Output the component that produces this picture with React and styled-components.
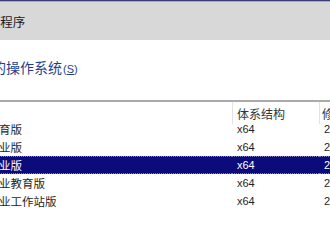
import React from "react";
import styled, { createGlobalStyle } from "styled-components";

const Global = createGlobalStyle`
  html, body { margin: 0; padding: 0; background: #ffffff; overflow: hidden; }
  body { width: 330px; height: 248px; }
`;

const FONT = `"Liberation Sans", "Noto Sans CJK SC", sans-serif`;

const Window = styled.div`
  margin-left: -90px;
  width: 700px;
  height: 248px;
  display: flex;
  flex-direction: column;
  font-family: ${FONT};
  background: #ffffff;
  border-top: 1px solid #3b3a78;
`;

const TitleBar = styled.div`
  height: 38px;
  border-top: 1px solid #a9a8c8;
  background: #d8d8d8;
  display: flex;
  align-items: center;
  padding-left: 11px;
  font-size: 12.5px;
  color: #1a1a1a;
`;

const Body = styled.div`
  height: 60px;
  display: flex;
  align-items: center;
  padding-left: 12px;
  padding-bottom: 7px;
  box-sizing: border-box;
`;

const Heading = styled.div`
  font-size: 14px;
  color: #1f3f8e;
  display: flex;
  align-items: baseline;
`;

const Accel = styled.span`
  font-size: 11px;
  margin-left: 1px;
  & u { text-decoration: underline; }
`;

const List = styled.div`
  border-top: 2px solid #ababab;
  display: grid;
  grid-template-columns: 322px 87px 200px;
  grid-auto-rows: 18px;
`;

const HeaderCell = styled.div`
  height: 22px;
  display: flex;
  align-items: center;
  padding-left: ${(p) => p.$pad}px;
  font-size: 12px;
  color: #333;
  border-left: ${(p) => (p.$divider ? "1px solid #e3e3e3" : "none")};
  box-sizing: border-box;
  white-space: nowrap;
  overflow: hidden;
`;

const Row = styled.div`
  display: contents;
`;

const Cell = styled.div`
  display: flex;
  align-items: center;
  padding-left: ${(p) => p.$pad}px;
  font-size: ${(p) => p.$size}px;
  white-space: nowrap;
  overflow: hidden;
  box-sizing: border-box;
  color: ${(p) => (p.$sel ? "#ffffff" : "#1e1e1e")};
  background: ${(p) => (p.$sel ? "#0b0b7c" : "transparent")};
  border-top: 1px dotted ${(p) => (p.$sel ? "#7f7fc0" : "transparent")};
  border-bottom: 1px dotted ${(p) => (p.$sel ? "#7f7fc0" : "transparent")};
`;

const rows = [
  { name: "Windows 10 教育版", arch: "x64", date: "2019/12/7" },
  { name: "Windows 10 企业版", arch: "x64", date: "2019/12/7" },
  { name: "Windows 10 专业版", arch: "x64", date: "2019/12/7", sel: true },
  { name: "Windows 10 专业教育版", arch: "x64", date: "2019/12/7" },
  { name: "Windows 10 专业工作站版", arch: "x64", date: "2019/12/7" },
];

export default function App() {
  return (
    <>
      <Global />
      <Window>
        <TitleBar>Windows 安装程序</TitleBar>
        <Body>
          <Heading>
            选择要安装的操作系统
            <Accel>
              (<u>S</u>)
            </Accel>
          </Heading>
        </Body>
        <List>
          <HeaderCell $pad={12}>操作系统</HeaderCell>
          <HeaderCell $pad={4} $divider>
            体系结构
          </HeaderCell>
          <HeaderCell $pad={2} $divider>
            修改日期
          </HeaderCell>
          {rows.map((r) => (
            <Row key={r.name}>
              <Cell $pad={11.6} $size={11.5} $sel={r.sel}>
                {r.name}
              </Cell>
              <Cell $pad={5} $size={11} $sel={r.sel}>
                {r.arch}
              </Cell>
              <Cell $pad={5} $size={11} $sel={r.sel}>
                {r.date}
              </Cell>
            </Row>
          ))}
        </List>
      </Window>
    </>
  );
}
